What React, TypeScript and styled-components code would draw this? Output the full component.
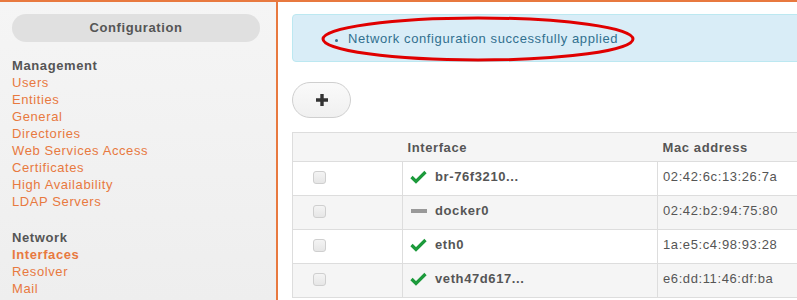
import React from "react";
import styled, {createGlobalStyle} from "styled-components";

const GlobalStyle = createGlobalStyle`
    html, body {
        margin: 0;
        padding: 0;
        overflow: hidden;
        background: #fff;
    }
    body {
        font-family: "Liberation Sans", Arial, sans-serif;
        font-size: 13px;
        color: #555;
    }
`;

const Page = styled.div`
    display: flex;
    border-top: 2px solid #e8793f;
    width: 1100px;
    height: 298px;
`;

const Sidebar = styled.aside`
    width: 278px;
    flex-shrink: 0;
    box-sizing: border-box;
    padding: 12px 16px 0 12px;
    background: linear-gradient(#f5f5f5, #eeeeee);
    border-right: 2px solid #e8793f;
`;

const SidebarTitle = styled.div`
    height: 28px;
    line-height: 27px;
    border-radius: 14px;
    background: #e0e0e0;
    text-align: center;
    font-weight: bold;
    font-size: 13px;
    letter-spacing: 0.6px;
    color: #555;
`;

const MenuGroup = styled.div`
    margin-top: 15px;
    & + & {
        margin-top: 19px;
    }
`;

const GroupTitle = styled.div`
    font-weight: bold;
    line-height: 17px;
    letter-spacing: 0.6px;
    color: #555;
`;

const MenuLink = styled.a<{ $active?: boolean }>`
    display: block;
    line-height: 17px;
    letter-spacing: 0.6px;
    color: #e8793f;
    text-decoration: none;
    font-weight: ${p => (p.$active ? "bold" : "normal")};
`;

const Main = styled.main`
    flex: 1;
    padding: 12px 0 0 14px;
`;

const Alert = styled.div`
    position: relative;
    height: 48px;
    box-sizing: border-box;
    background: #d9edf7;
    border: 1px solid #bce8f1;
    border-radius: 4px;
    color: #31708f;
    display: flex;
    align-items: center;
`;

const AlertList = styled.ul`
    margin: 0;
    padding-left: 55px;
    letter-spacing: 0.6px;
    li::marker {
        font-size: 11px;
    }
`;

const Highlight = styled.svg`
    position: absolute;
    left: 28px;
    top: 1px;
    pointer-events: none;
`;

const AddButton = styled.button`
    display: flex;
    align-items: center;
    justify-content: center;
    margin-top: 20px;
    width: 59px;
    height: 36px;
    border: 1px solid #cfcfcf;
    border-radius: 18px;
    background: linear-gradient(#fafafa, #f0f0f0);
    padding: 0;
`;

const Table = styled.table`
    margin-top: 14px;
    width: 760px;
    border-collapse: collapse;
    border: 1px solid #dddddd;
`;

const HeadCell = styled.th<{ $w?: number }>`
    width: ${p => (p.$w ? `${p.$w}px` : "auto")};
    height: 29px;
    box-sizing: border-box;
    padding: 0 5px;
    text-align: left;
    vertical-align: middle;
    font-weight: bold;
    letter-spacing: 0.6px;
    color: #555;
    background: #f5f5f5;
    border-bottom: 1px solid #dddddd;
`;

const Row = styled.tr<{ $striped: boolean }>`
    background: ${p => (p.$striped ? "#f5f5f5" : "#fff")};
    border-top: 1px solid #dddddd;
`;

const Cell = styled.td`
    height: 34px;
    box-sizing: border-box;
    padding: 7px 5px 0;
    line-height: 16px;
    vertical-align: top;
    border-left: 1px solid #dddddd;
    letter-spacing: 0.6px;
    color: #555;
    &:first-child {
        border-left: none;
    }
`;

const CheckCell = styled(Cell)`
    padding: 9px 0 0 20px;
`;

const Checkbox = styled.span`
    display: block;
    width: 11px;
    height: 11px;
    border: 1px solid #cfcfcf;
    border-radius: 3px;
    background: linear-gradient(#f4f4f4, #e6e6e6);
`;

const IfaceName = styled.div`
    display: flex;
    align-items: center;
    height: 16px;
    gap: 8px;
    font-weight: bold;
`;

const StatusBox = styled.span`
    display: flex;
    align-items: center;
    justify-content: center;
    width: 17px;
    height: 16px;
    margin-left: 2px;
`;

const DownBar = styled.span`
    display: block;
    width: 16px;
    height: 4px;
    background: #999;
`;

const rows = [
    {name: "br-76f3210...", mac: "02:42:6c:13:26:7a", up: true},
    {name: "docker0", mac: "02:42:b2:94:75:80", up: false},
    {name: "eth0", mac: "1a:e5:c4:98:93:28", up: true},
    {name: "veth47d617...", mac: "e6:dd:11:46:df:ba", up: true},
];

const Check = () => (
    <svg width="17" height="14" viewBox="0 0 17 14">
        <polyline points="1.5,7 6,11.5 15.5,2" fill="none" stroke="#1c9a3b" strokeWidth="3.2"/>
    </svg>
);

const App: React.FC = () => (
    <>
        <GlobalStyle/>
        <Page>
            <Sidebar>
                <SidebarTitle>Configuration</SidebarTitle>
                <MenuGroup>
                    <GroupTitle>Management</GroupTitle>
                    {["Users", "Entities", "General", "Directories", "Web Services Access", "Certificates",
                        "High Availability", "LDAP Servers"].map(l => (
                        <MenuLink key={l} href="#">{l}</MenuLink>
                    ))}
                </MenuGroup>
                <MenuGroup>
                    <GroupTitle>Network</GroupTitle>
                    <MenuLink href="#" $active>Interfaces</MenuLink>
                    <MenuLink href="#">Resolver</MenuLink>
                    <MenuLink href="#">Mail</MenuLink>
                </MenuGroup>
            </Sidebar>
            <Main>
                <Alert>
                    <AlertList>
                        <li>Network configuration successfully applied</li>
                    </AlertList>
                    <Highlight width="320" height="48" viewBox="0 0 320 48">
                        <ellipse cx="157" cy="23" rx="155" ry="21" fill="none" stroke="#e00000" strokeWidth="3"/>
                    </Highlight>
                </Alert>
                <AddButton>
                    <svg width="12" height="12" viewBox="0 0 12 12">
                        <path d="M4.3 0h3.4v4.3H12v3.4H7.7V12H4.3V7.7H0V4.3h4.3z" fill="#333"/>
                    </svg>
                </AddButton>
                <Table>
                    <thead>
                    <tr>
                        <HeadCell $w={110}/>
                        <HeadCell $w={255}>Interface</HeadCell>
                        <HeadCell>Mac address</HeadCell>
                    </tr>
                    </thead>
                    <tbody>
                    {rows.map((r, i) => (
                        <Row key={r.name} $striped={i % 2 === 1}>
                            <CheckCell><Checkbox/></CheckCell>
                            <Cell>
                                <IfaceName>
                                    <StatusBox>{r.up ? <Check/> : <DownBar/>}</StatusBox>
                                    {r.name}
                                </IfaceName>
                            </Cell>
                            <Cell>{r.mac}</Cell>
                        </Row>
                    ))}
                    </tbody>
                </Table>
            </Main>
        </Page>
    </>
);

export default App;
